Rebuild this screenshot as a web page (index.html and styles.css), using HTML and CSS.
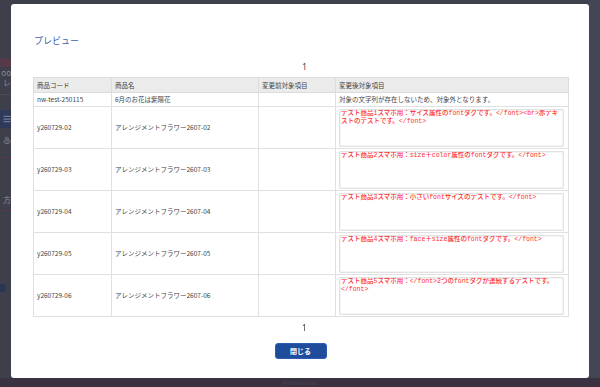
FILE: index.html
```html
<!DOCTYPE html>
<html lang="ja">
<head>
<meta charset="utf-8">
<title>プレビュー</title>
<link rel="stylesheet" href="styles.css">
</head>
<body>
<div class="page">
  <aside class="side">
    <div class="band band-top"></div>
    <div class="band band-red"></div>
    <div class="band band-text"><span class="t1">oo</span><span class="t2">レ</span></div>
    <div class="band band-menu">☰</div>
    <div class="band band-icon">♨</div>
    <div class="band band-gap"></div>
    <div class="band band-kata">方</div>
    <div class="band band-line"></div>
    <div class="band band-rest"><span class="dot"></span></div>
  </aside>
  <main class="main"></main>
  <div class="edge"></div>
</div>
<footer class="foot">© Hanakoi Inc.</footer>

<div class="modal">
  <h2 class="title">プレビュー</h2>
  <div class="pager">1</div>
  <table class="grid">
    <colgroup>
      <col class="c1"><col class="c2"><col class="c3"><col class="c4">
    </colgroup>
    <thead>
      <tr class="hrow"><th>商品コード</th><th>商品名</th><th>変更前対象項目</th><th>変更後対象項目</th></tr>
    </thead>
    <tbody>
      <tr class="srow"><td>nw-test-250115</td><td>6月のお花は紫陽花</td><td></td><td>対象の文字列が存在しないため、対象外となります。</td></tr>
      <tr class="trow"><td>y260729-02</td><td>アレンジメントフラワー2607-02</td><td></td><td class="tcell"><textarea class="ta" readonly>テスト商品1スマホ用：サイズ属性のfontタグです。&lt;/font&gt;&lt;br&gt;赤テキストのテストです。&lt;/font&gt;</textarea></td></tr>
      <tr class="trow"><td>y260729-03</td><td>アレンジメントフラワー2607-03</td><td></td><td class="tcell"><textarea class="ta" readonly>テスト商品2スマホ用：size＋color属性のfontタグです。&lt;/font&gt;</textarea></td></tr>
      <tr class="trow"><td>y260729-04</td><td>アレンジメントフラワー2607-04</td><td></td><td class="tcell"><textarea class="ta" readonly>テスト商品3スマホ用：小さいfontサイズのテストです。&lt;/font&gt;</textarea></td></tr>
      <tr class="trow"><td>y260729-05</td><td>アレンジメントフラワー2607-05</td><td></td><td class="tcell"><textarea class="ta" readonly>テスト商品4スマホ用：face＋size属性のfontタグです。&lt;/font&gt;</textarea></td></tr>
      <tr class="trow"><td>y260729-06</td><td>アレンジメントフラワー2607-06</td><td></td><td class="tcell"><textarea class="ta" readonly>テスト商品5スマホ用：&lt;/font&gt;2つのfontタグが連続するテストです。&lt;/font&gt;</textarea></td></tr>
    </tbody>
  </table>
  <div class="pager pager-bottom"><span class="num">1</span></div>
  <div class="actions"><button class="btn" type="button">閉じる</button></div>
</div>
</body>
</html>
```
FILE: styles.css
```css
html, body {
  margin: 0;
  padding: 0;
}
body {
  width: 600px;
  height: 387px;
  overflow: hidden;
  background: #3e414c;
  font-family: "Noto Sans CJK JP", "Noto Sans", sans-serif;
}
.page {
  display: flex;
  height: 378px;
}
.side {
  width: 40px;
  display: flex;
  flex-direction: column;
  background: #3d404b;
}
.band { color: #8a8c94; font-size: 8px; line-height: 10px; }
.band-top { height: 58px; }
.band-red { height: 9px; background: #573a4a; }
.band-text {
  height: 28px;
  box-sizing: border-box;
  border-bottom: 1px solid #4a4c56;
  display: flex;
  flex-direction: column;
  align-items: flex-end;
  padding: 1px 29px 0 0;
}
.band-menu { height: 18px; margin-top: 15px; background: #2f3a5a; text-align: right; padding-right: 29px; color: #6c7591; line-height: 18px; }
.band-icon { height: 29px; text-align: right; padding-right: 29px; line-height: 24px; border-bottom: 1px solid #57394a; }
.band-gap { height: 37px; }
.band-kata { height: 15px; text-align: right; padding-right: 29px; }
.band-line { height: 1px; background: #56394a; }
.band-rest { flex: 1; position: relative; }
.dot {
  position: absolute;
  left: -2px;
  top: 73px;
  width: 8px;
  height: 8px;
  border-radius: 50%;
  background: #2b3556;
}
.main { flex: 1; background: #3f424d; }
.edge { width: 11px; background: #434753; }
.foot {
  height: 9px;
  background: #3a3241;
  color: #4c4452;
  font-size: 5px;
  line-height: 9px;
  text-align: center;
}

.modal {
  position: fixed;
  top: 4px;
  left: 11px;
  width: 578px;
  height: 374px;
  box-sizing: border-box;
  padding: 30px 21px 0 22px;
  background: #fff;
  border-radius: 3px;
  color: #444;
  font-family: "Noto Sans CJK JP", "Noto Sans", sans-serif;
}
.title {
  margin: 0 0 14px 1px;
  font-size: 9px;
  line-height: 14px;
  font-weight: normal;
  color: #3a62ab;
}
.pager {
  text-align: center;
  padding-left: 8px;
  font-family: "Noto Sans", sans-serif;
  font-size: 8px;
  line-height: 10px;
  color: #333;
  margin-bottom: 5px;
}
.pager-bottom {
  margin: 6px 0 0;
  height: 10px;
}
.num {
  display: inline-block;
  color: #333;
  will-change: transform;
}

.grid {
  width: 535px;
  border-collapse: collapse;
  table-layout: fixed;
  font-size: 6.5px;
  line-height: 9px;
  color: #444;
}
.c1 { width: 78px; }
.c2 { width: 147px; }
.c3 { width: 77px; }
.c4 { width: 233px; }
.grid th, .grid td {
  border: 1px solid #e0e0e0;
  padding: 0 3px;
  text-align: left;
  vertical-align: middle;
  font-weight: normal;
  white-space: nowrap;
  overflow: hidden;
}
.grid th {
  background: #ebebeb;
  color: #444;
  border-color: #dcdcdc;
}
.hrow { height: 15px; }
.srow { height: 14px; }
.trow { height: 42px; }
.grid td.tcell { padding: 0 3px; }
.ta {
  display: block;
  box-sizing: border-box;
  width: 225px;
  height: 38px;
  margin: 0;
  padding: 0 1px;
  border: 1px solid #e2e2e2;
  box-shadow: inset 0 0 0 1px #f4f4f4;
  border-radius: 1px;
  background: #fff;
  color: #ff2b2b;
  font-family: "Liberation Mono", "Noto Sans CJK JP", monospace;
  font-size: 6.5px;
  font-weight: 500;
  line-height: 8.7px;
  resize: none;
  overflow: hidden;
  white-space: pre-wrap;
}

.actions {
  display: flex;
  justify-content: center;
  margin-top: 10px;
}
.btn {
  width: 52px;
  height: 16px;
  padding: 0;
  border: 1px solid #2d5db3;
  border-radius: 3px;
  background: #1f4c9b;
  color: #fff;
  font-family: "Noto Sans CJK JP", sans-serif;
  font-size: 7px;
  font-weight: bold;
  line-height: 14px;
}
```
